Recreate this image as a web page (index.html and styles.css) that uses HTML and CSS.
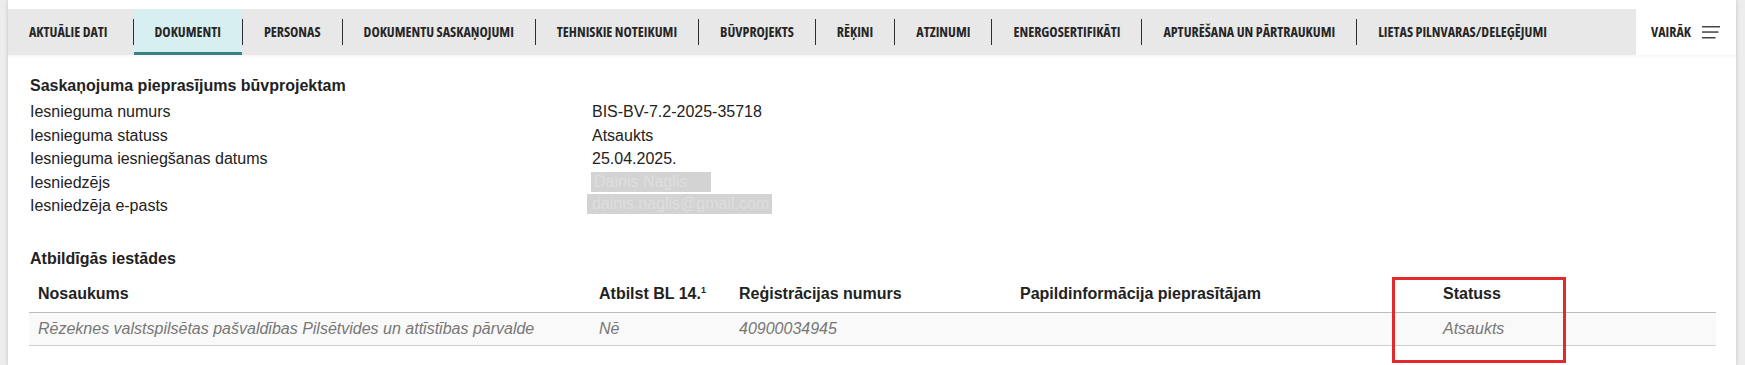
FILE: index.html
```html
<!DOCTYPE html>
<html lang="lv">
<head>
<meta charset="utf-8">
<title>Dokumenti</title>
<link rel="stylesheet" href="styles.css">
</head>
<body>
<div class="card">
  <nav class="tabbar">
    <div class="tabs">
      <a class="tab first">AKTUĀLIE DATI</a>
      <span class="sep"></span>
      <a class="tab active">DOKUMENTI</a>
      <span class="sep"></span>
      <a class="tab">PERSONAS</a>
      <span class="sep"></span>
      <a class="tab">DOKUMENTU SASKAŅOJUMI</a>
      <span class="sep"></span>
      <a class="tab">TEHNISKIE NOTEIKUMI</a>
      <span class="sep"></span>
      <a class="tab">BŪVPROJEKTS</a>
      <span class="sep"></span>
      <a class="tab">RĒĶINI</a>
      <span class="sep"></span>
      <a class="tab">ATZINUMI</a>
      <span class="sep"></span>
      <a class="tab">ENERGOSERTIFIKĀTI</a>
      <span class="sep"></span>
      <a class="tab">APTURĒŠANA UN PĀRTRAUKUMI</a>
      <span class="sep"></span>
      <a class="tab">LIETAS PILNVARAS/DELEĢĒJUMI</a>
    </div>
    <a class="more">
      <span>VAIRĀK</span>
      <svg class="burger" width="19" height="13" viewBox="0 0 19 13">
        <rect x="0" y="0" width="18" height="1.5" fill="#444"/>
        <rect x="0" y="5.3" width="16.5" height="1.5" fill="#444"/>
        <rect x="0" y="11" width="13.5" height="1.5" fill="#444"/>
      </svg>
    </a>
  </nav>

  <main class="content">
    <h2 class="title first">Saskaņojuma pieprasījums būvprojektam</h2>
    <div class="info">
      <div class="label">Iesnieguma numurs</div>
      <div class="value">BIS-BV-7.2-2025-35718</div>
      <div class="label">Iesnieguma statuss</div>
      <div class="value">Atsaukts</div>
      <div class="label">Iesnieguma iesniegšanas datums</div>
      <div class="value">25.04.2025.</div>
      <div class="label">Iesniedzējs</div>
      <div class="value redacted"><span class="blur name">Dainis Naglis</span></div>
      <div class="label">Iesniedzēja e-pasts</div>
      <div class="value redacted">dainis.naglis@gmail.com<span class="blur mail">dainis.naglis@gmail.com</span></div>
    </div>

    <h2 class="title second">Atbildīgās iestādes</h2>
    <table class="grid">
      <colgroup>
        <col class="c1"><col class="c2"><col class="c3"><col class="c4"><col class="c5">
      </colgroup>
      <thead>
        <tr>
          <th>Nosaukums</th>
          <th>Atbilst BL 14.<sup>1</sup></th>
          <th>Reģistrācijas numurs</th>
          <th>Papildinformācija pieprasītājam</th>
          <th>Statuss</th>
        </tr>
      </thead>
      <tbody>
        <tr>
          <td>Rēzeknes valstspilsētas pašvaldības Pilsētvides un attīstības pārvalde</td>
          <td>Nē</td>
          <td>40900034945</td>
          <td></td>
          <td>Atsaukts</td>
        </tr>
      </tbody>
    </table>
  </main>
  <div class="highlight"></div>
</div>
</body>
</html>
```

FILE: styles.css
```css
html, body {
  margin: 0;
  padding: 0;
}
body {
  background: #ededed;
  width: 1745px;
  height: 365px;
  overflow: hidden;
  font-family: "Liberation Sans", Arial, sans-serif;
  font-size: 16px;
  line-height: 23.4px;
  color: #222;
}
.card {
  position: relative;
  margin-left: 8px;
  width: 1728px;
  height: 365px;
  padding-top: 9px;
  box-sizing: border-box;
  background: #fff;
  box-shadow: 0 0 4px rgba(0, 0, 0, 0.18);
}
.tabbar {
  display: flex;
  height: 46px;
  box-shadow: 0 1px 2px rgba(0, 0, 0, 0.05);
}
.tabs {
  flex: 1;
  display: flex;
  align-items: center;
  background: #e8e8e8;
  overflow: hidden;
}
.tab, .more {
  font-family: "Open Sans", "DejaVu Sans Condensed", sans-serif;
  font-stretch: 75%;
  font-weight: 700;
  font-size: 14px;
  letter-spacing: 0;
  color: #262626;
}
.tab {
  display: flex;
  align-items: center;
  height: 46px;
  box-sizing: border-box;
  padding: 0 21px;
  white-space: nowrap;
  flex: none;
}
.tab.first {
  padding-right: 25px;
}
.tab.active {
  background: #d7eff0;
  border-bottom: 3px solid #3b8080;
  padding-top: 3px;
}
.sep {
  width: 1px;
  height: 26px;
  background: #2e2e2e;
  flex: none;
}
.more {
  width: 100px;
  flex: none;
  display: flex;
  align-items: center;
  padding-left: 15px;
  box-sizing: border-box;
  gap: 11px;
  background: #fff;
}
.burger {
  display: block;
}
.content {
  padding: 0 20px 0 21px;
}
.title {
  margin: 0;
  padding-left: 1px;
  font-size: 16px;
  font-weight: bold;
  line-height: 23.4px;
  color: #222;
}
.title.first {
  margin-top: 18.5px;
  margin-bottom: 3px;
}
.title.second {
  margin-top: 29.1px;
  margin-bottom: 1.5px;
}
.info {
  display: grid;
  grid-template-columns: 562px 1fr;
  padding-left: 1px;
  line-height: 23.6px;
}
.value {
  position: relative;
}
.redacted {
  color: #222;
}
.blur {
  position: absolute;
  height: 20px;
  line-height: 20px;
  background: #d3d3d3;
  color: #dedede;
  padding-left: 3px;
  box-sizing: border-box;
  white-space: nowrap;
  overflow: hidden;
}
.blur.name {
  left: -1px;
  top: 1.4px;
  width: 120px;
}
.blur.mail {
  left: -5px;
  top: -0.4px;
  width: 185px;
  padding-left: 5px;
}
.grid {
  width: 1687px;
  border-collapse: collapse;
  table-layout: fixed;
}
.c1 { width: 561px; }
.c2 { width: 140px; }
.c3 { width: 281px; }
.c4 { width: 423px; }
.c5 { width: 282px; }
.grid th {
  text-align: left;
  font-weight: bold;
  color: #222;
  padding: 9.7px 9px 7px 9px;
  border-bottom: 1px solid #bdbdbd;
  white-space: nowrap;
}
.grid th sup {
  font-size: 9px;
  line-height: 0;
  vertical-align: 6px;
}
.grid td {
  font-style: italic;
  color: #777;
  padding: 4px 9px 5px;
  background: #f9f9f9;
  border-bottom: 1px solid #cfcfcf;
  white-space: nowrap;
}
.highlight {
  position: absolute;
  left: 1384px;
  top: 277px;
  width: 174px;
  height: 86px;
  box-sizing: border-box;
  border: 3px solid #e32a2a;
}
```
